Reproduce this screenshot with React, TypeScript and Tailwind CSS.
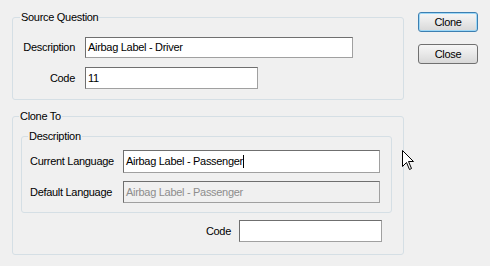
const font = "font-['Liberation_Sans',Arial,sans-serif]";

function TextBox({
  value,
  width,
  height,
  disabled,
  caret,
}: {
  value: string;
  width: string;
  height: string;
  disabled?: boolean;
  caret?: boolean;
}) {
  return (
    <div
      className={`${width} ${height} flex items-center border border-[#6f6f6f] border-r-[#a0a0a0] border-b-[#a0a0a0] pl-[2px] ${
        disabled ? "bg-[#f0f0f0] text-[#8d8d8d]" : "bg-white text-black"
      }`}
    >
      <span>{value}</span>
      {caret && <span className="inline-block w-px h-[13px] bg-black" />}
    </div>
  );
}

function Button({ label, primary }: { label: string; primary?: boolean }) {
  return (
    <button
      className={`w-[60px] h-[20px] rounded-[3px] border text-[11px] leading-none text-black bg-gradient-to-b from-[#f6f6f6] via-[#e8e8e8] to-[#d8d8d8] ${
        primary ? "border-[#3c7fb1] shadow-[inset_0_0_0_1px_#9ed8f7]" : "border-[#707070]"
      }`}
    >
      {label}
    </button>
  );
}

export default function App() {
  return (
    <div
      className={`relative w-[490px] h-[266px] bg-[#f0f0f0] text-[11px] tracking-[-0.3px] text-black ${font}`}
    >
      <div className="flex pl-[12px] pt-[11px]">
        {/* LEFT COLUMN */}
        <div className="w-[392px] flex flex-col">
          {/* SOURCE QUESTION */}
          <fieldset className="h-[89px] border border-[#d5dfe5] rounded-[3px] p-0 m-0">
            <legend className="ml-[7px] px-[1px] leading-[13px]">Source Question</legend>
            <div className="flex items-center mt-[13px]">
              <span className="w-[62px] text-right">Description</span>
              <div className="ml-[10px]">
                <TextBox value="Airbag Label - Driver" width="w-[268px]" height="h-[21px]" />
              </div>
            </div>
            <div className="flex items-center mt-[9px]">
              <span className="w-[62px] text-right">Code</span>
              <div className="ml-[10px]">
                <TextBox value="11" width="w-[173px]" height="h-[22px]" />
              </div>
            </div>
          </fieldset>

          {/* CLONE TO */}
          <fieldset className="mt-[10px] h-[145px] border border-[#d5dfe5] rounded-[3px] p-0 m-0">
            <legend className="ml-[6px] px-[1px] leading-[13px]">Clone To</legend>
            <fieldset className="ml-[8px] mt-[7px] w-[371px] h-[83px] border border-[#d5dfe5] rounded-[3px] p-0 m-0">
              <legend className="ml-[6px] px-[1px] leading-[13px]">Description</legend>
              <div className="flex items-center mt-[7px]">
                <span className="w-[101px] pl-[8px]">Current Language</span>
                <TextBox
                  value="Airbag Label - Passenger"
                  width="w-[257px]"
                  height="h-[23px]"
                  caret
                />
              </div>
              <div className="flex items-center mt-[8px]">
                <span className="w-[101px] pl-[8px]">Default Language</span>
                <TextBox
                  value="Airbag Label - Passenger"
                  width="w-[257px]"
                  height="h-[22px]"
                  disabled
                />
              </div>
            </fieldset>
            <div className="flex items-center justify-end mt-[7px] pr-[21px]">
              <span className="mr-[8px]">Code</span>
              <TextBox value="" width="w-[143px]" height="h-[22px]" />
            </div>
          </fieldset>
        </div>

        {/* BUTTONS */}
        <div className="ml-[14px] mt-[1px] flex flex-col gap-[12px]">
          <Button label="Clone" primary />
          <Button label="Close" />
        </div>
      </div>

      {/* MOUSE POINTER */}
      <svg
        className="absolute left-[402px] top-[150px]"
        width="13"
        height="21"
        viewBox="0 0 13 21"
      >
        <path
          d="M0.5 0.5 L0.5 16.5 L4.5 12.5 L7.5 19.5 L9.5 18.5 L6.5 11.5 L11.5 11.5 Z"
          fill="white"
          stroke="black"
          strokeWidth="1"
        />
      </svg>
    </div>
  );
}
